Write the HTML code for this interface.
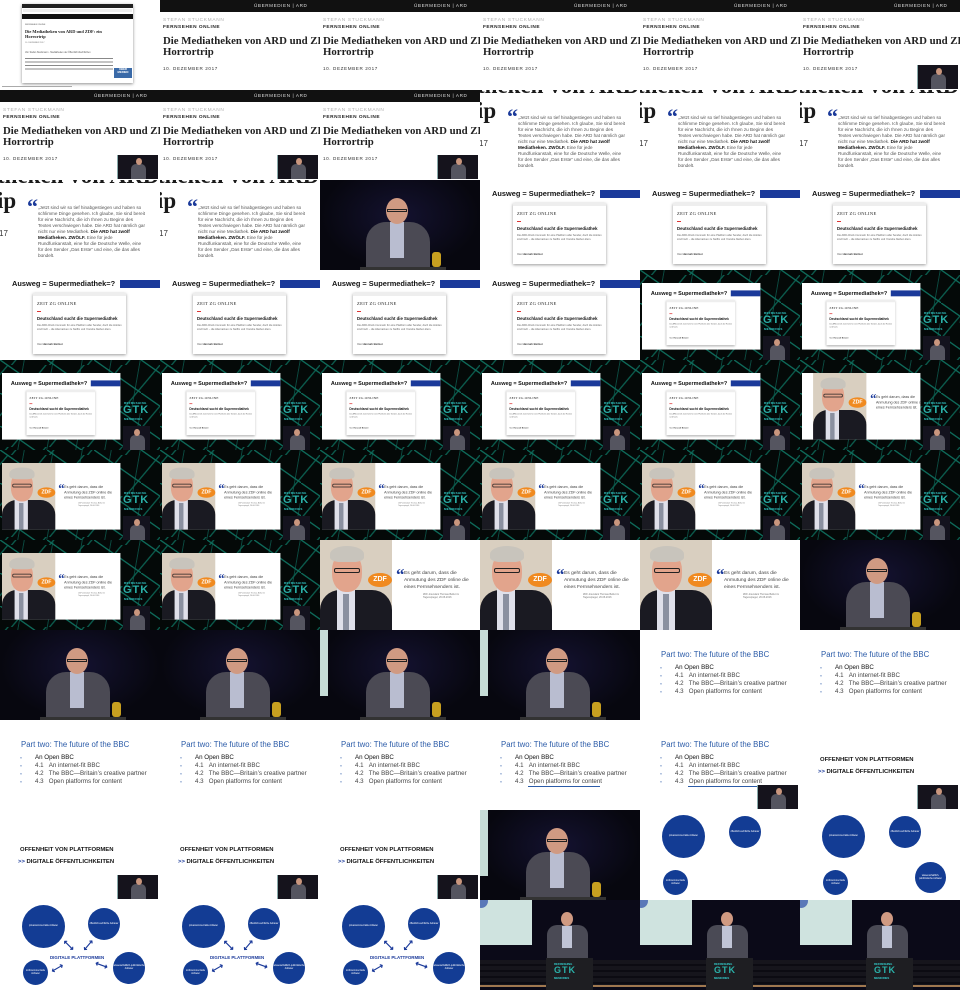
<!DOCTYPE html>
<html><head><meta charset="utf-8"><style>
*{margin:0;padding:0;box-sizing:border-box}
body{width:960px;height:990px;overflow:hidden;background:#fff}
.grid{display:grid;grid-template-columns:repeat(6,160px);grid-template-rows:repeat(11,90px)}
.c{position:relative;overflow:hidden;width:160px;height:90px;background:#fff;font-family:"Liberation Sans",sans-serif}
.c div{position:absolute;white-space:nowrap}
.bar{left:0;top:0;width:160px;height:12px;background:#111}
.bar span{position:absolute;left:94px;top:3px;font-size:4.6px;color:#ddd;letter-spacing:.6px}
.au{left:3px;top:18px;font-size:4.8px;color:#b0b0b0;letter-spacing:.7px}
.fo{left:3px;top:25px;font-size:4.8px;font-weight:bold;color:#222;letter-spacing:.5px}
.tt{left:3px;top:36px;font:bold 10.8px/11px "Liberation Serif",serif;color:#222}
.dt{left:3px;top:66px;font-size:4.6px;color:#333;letter-spacing:.6px}
.th{left:117px;top:65px;width:41px;height:24px;background:#15131c;border-left:1px solid #8aa}
.tb{left:13px;top:9px;width:15px;height:15px;background:#555560;border-radius:5px 5px 0 0}
.th2{left:18px;top:3px;width:6px;height:7px;background:#c9967e;border-radius:50%}
.qt{left:-3px;top:-17px;font:bold 23px "Liberation Serif",serif;color:#1a1a1a}
.ip{left:-3px;top:8px;font:bold 23px "Liberation Serif",serif;color:#1a1a1a}
.y17{left:-1px;top:49px;font-size:8px;color:#333}
.qm{left:27px;top:14px;font:bold 22px "Liberation Serif",serif;color:#1b3a9a}
.qx{left:38px;top:25px;width:108px;font-size:4.6px;line-height:6px;color:#555;white-space:normal!important}
.qx b{color:#111}
.wt{left:12px;top:9px;font-weight:bold;font-size:7.4px;color:#111}
.wb{left:120px;top:10px;width:40px;height:8px;background:#1b3a9a}
.card{left:33px;top:23px;width:93px;height:61px;background:#fff;box-shadow:0 1px 3px rgba(0,0,0,.4)}
.k1{left:0;top:0;width:93px;height:3px;background:#eee}
.k2{left:4px;top:8px;font:4.6px "Liberation Serif",serif;color:#222;letter-spacing:.3px}
.k3{left:4px;top:18px;width:4px;height:1px;background:#d33}
.k4{left:4px;top:23px;font-weight:bold;font-size:4.3px;color:#111}
.k5{left:4px;top:31px;width:85px;font-size:2.6px;line-height:3.6px;color:#666;white-space:normal!important}
.k6{left:4px;top:49px;font-size:2.8px;color:#444}
.g{background:linear-gradient(35deg,transparent 48.5%,#0e6a5a 49.5%,#0e6a5a 51%,transparent 52%) 0 0/47px 33px,linear-gradient(-50deg,transparent 48.5%,#0b5a4c 49.5%,#0b5a4c 51%,transparent 52%) 10px 5px/38px 41px,linear-gradient(100deg,transparent 48.5%,#0a4a40 49.5%,#0a4a40 51%,transparent 52%) 5px 0/29px 53px,#040908}
.gs{left:2px;top:13px;width:160px;height:90px;background:#fff;transform:scale(.74);transform-origin:0 0;overflow:hidden}
.l1{left:124px;top:41px;font-size:3px;font-weight:bold;color:#3cc;letter-spacing:.3px}
.l2{left:123px;top:44px;font-size:11px;font-weight:bold;color:#2ab0a8;letter-spacing:1px}
.l3{left:124px;top:57px;font-size:3px;font-weight:bold;color:#3cc;letter-spacing:.3px}
.gp{left:123px;top:66px;width:27px;height:24px;background:#14131e}
.zp{left:0;top:0;width:72px;height:90px;background:#d9cfc0}
.zs{left:0;top:50px;width:72px;height:40px;background:#1a1a22;border-radius:20px 20px 0 0}
.zsh{left:17px;top:48px;width:18px;height:42px;background:#dfe0ea}
.zti{left:23px;top:54px;width:6px;height:36px;background:#8a90a0}
.zf{left:12px;top:12px;width:30px;height:40px;background:#e2a48c;border-radius:45%}
.zh{left:10px;top:6px;width:34px;height:16px;background:#c8c4bc;border-radius:50% 50% 30% 30%}
.zg{left:14px;top:28px;width:26px;height:5px;border:1px solid #222;border-radius:2px}
.zdf{left:48px;top:33px;width:24px;height:14px;background:#f08a20;border-radius:50%;color:#fff;font-size:7px;font-weight:bold;line-height:14px;text-align:center}
.zq{left:76px;top:25px;font:bold 17px "Liberation Serif",serif;color:#1b3a9a}
.zx{left:84px;top:30px;width:70px;font-size:4.9px;line-height:7px;color:#444;white-space:normal!important}
.zc{left:103px;top:53px;font-size:2.5px;line-height:3.2px;color:#777}
.sp{background:radial-gradient(ellipse at 50% 40%,#141230,#07070f 70%)}
.scr{left:0;top:0;width:8px;height:66px;background:#c6dcd7}
.bd{left:46px;top:42px;width:64px;height:50px;background:#4b4a54;border-radius:20px 20px 0 0}
.sh{left:70px;top:42px;width:14px;height:36px;background:#b9bdd0}
.hd{left:66px;top:18px;width:22px;height:26px;background:#d09a82;border-radius:50%}
.gl{left:67px;top:29px;width:20px;height:3px;border:1px solid #222}
.gd{left:112px;top:72px;width:9px;height:15px;background:#c8a020;border-radius:3px}
.pd{left:40px;top:87px;width:86px;height:3px;background:#333}
.bt{left:21px;top:20px;font-size:7.8px;color:#2b5ba8}
.bl{font-size:6.2px;color:#444}
.bu{left:20px;font-size:3.5px;color:#2b5ba8}
.un{left:48px;top:66px;width:72px;height:1px;background:#2b5ba8}
.o1{left:20px;top:37px;font-weight:bold;font-size:5.9px;color:#111}
.o2{left:18px;top:49px;font-weight:bold;font-size:5.9px;color:#111}
.o2 span{color:#1b3a9a}
.ci{background:#133c94;border-radius:50%;color:#fff;font-size:2.3px;line-height:3px;text-align:center;display:flex;align-items:center;justify-content:center;white-space:normal!important}
.dp{left:50px;top:55px;font-weight:bold;font-size:4.4px;color:#1b3a9a}
.ar{font-size:9px;color:#1b3a9a;font-weight:bold}
.st{background:#0b0a18}
.ss{left:0;top:0;width:52px;height:45px;background:#cfe3df}
.sc{left:-6px;top:-6px;width:14px;height:14px;background:#5a78b8;border-radius:50%}
.fl{left:0;top:60px;width:160px;height:26px;background:repeating-linear-gradient(#16151c 0 4px,#0c0b12 4px 6px)}
.ed{left:0;top:85px;width:160px;height:2px;background:#a07850}
.pb{left:67px;top:25px;width:41px;height:36px;background:#4a4a55;border-radius:10px 10px 0 0}
.ps{left:82px;top:26px;width:10px;height:22px;background:#c0c4d6}
.ph{left:81px;top:12px;width:12px;height:14px;background:#d09a82;border-radius:50%}
.po{left:66px;top:58px;width:47px;height:32px;background:#1e1e22}
.pt1{left:74px;top:62px;font-size:2.8px;color:#3cc;font-weight:bold}
.pt2{left:74px;top:65px;font-size:9px;color:#2ab0a8;font-weight:bold;letter-spacing:1px}
.pt3{left:74px;top:76px;font-size:2.8px;color:#3cc;font-weight:bold}
.aw{left:22px;top:4px;width:111px;height:79px;background:#fff;box-shadow:0 1px 3px rgba(0,0,0,.45)}
</style></head><body><div class="grid">

<div class="c"><div class="aw"><div style="left:0;top:0;width:111px;height:4px;background:#222"></div><div style="left:1px;top:5px;width:109px;height:3px;background:#eee"></div><div style="left:0;top:10px;width:111px;height:5px;background:#111"></div><div style="left:3px;top:20px;font-size:2px;color:#555">FERNSEHEN ONLINE</div><div style="left:3px;top:25px;font:bold 4.4px/5px 'Liberation Serif',serif;color:#222">Die Mediatheken von ARD und ZDF: ein<br>Horrortrip</div><div style="left:3px;top:38px;font-size:2px;color:#777">10. DEZEMBER 2017</div><div style="left:3px;top:48px;font-size:2.3px;color:#555">Von Stefan Stuckmann · Mediatheken der Öffentlich-Rechtlichen</div><div style="left:3px;top:54px;width:88px;height:14px;background:repeating-linear-gradient(#888 0 1px,#fff 1px 3.5px)"></div><div style="left:92px;top:64px;width:18px;height:10px;background:#3a6aa8;color:#fff;font-size:2.8px;line-height:3.3px;font-weight:bold;text-align:center">ÜBER<br>MEDIEN</div></div><div style="left:2px;top:86px;width:70px;height:1px;background:#aaa"></div></div>
<div class="c"><div class="bar"><span>ÜBERMEDIEN | ARD</span></div><div class="au">STEFAN STUCKMANN</div><div class="fo">FERNSEHEN ONLINE</div><div class="tt">Die Mediatheken von ARD und ZDF: ein<br>Horrortrip</div><div class="dt">10. DEZEMBER 2017</div></div>
<div class="c"><div class="bar"><span>ÜBERMEDIEN | ARD</span></div><div class="au">STEFAN STUCKMANN</div><div class="fo">FERNSEHEN ONLINE</div><div class="tt">Die Mediatheken von ARD und ZDF: ein<br>Horrortrip</div><div class="dt">10. DEZEMBER 2017</div></div>
<div class="c"><div class="bar"><span>ÜBERMEDIEN | ARD</span></div><div class="au">STEFAN STUCKMANN</div><div class="fo">FERNSEHEN ONLINE</div><div class="tt">Die Mediatheken von ARD und ZDF: ein<br>Horrortrip</div><div class="dt">10. DEZEMBER 2017</div></div>
<div class="c"><div class="bar"><span>ÜBERMEDIEN | ARD</span></div><div class="au">STEFAN STUCKMANN</div><div class="fo">FERNSEHEN ONLINE</div><div class="tt">Die Mediatheken von ARD und ZDF: ein<br>Horrortrip</div><div class="dt">10. DEZEMBER 2017</div></div>
<div class="c"><div class="bar"><span>ÜBERMEDIEN | ARD</span></div><div class="au">STEFAN STUCKMANN</div><div class="fo">FERNSEHEN ONLINE</div><div class="tt">Die Mediatheken von ARD und ZDF: ein<br>Horrortrip</div><div class="dt">10. DEZEMBER 2017</div><div class="th"><div class="tb"></div><div class="th2"></div></div></div>

<div class="c"><div class="bar"><span>ÜBERMEDIEN | ARD</span></div><div class="au">STEFAN STUCKMANN</div><div class="fo">FERNSEHEN ONLINE</div><div class="tt">Die Mediatheken von ARD und ZDF: ein<br>Horrortrip</div><div class="dt">10. DEZEMBER 2017</div><div class="th"><div class="tb"></div><div class="th2"></div></div></div>
<div class="c"><div class="bar"><span>ÜBERMEDIEN | ARD</span></div><div class="au">STEFAN STUCKMANN</div><div class="fo">FERNSEHEN ONLINE</div><div class="tt">Die Mediatheken von ARD und ZDF: ein<br>Horrortrip</div><div class="dt">10. DEZEMBER 2017</div><div class="th"><div class="tb"></div><div class="th2"></div></div></div>
<div class="c"><div class="bar"><span>ÜBERMEDIEN | ARD</span></div><div class="au">STEFAN STUCKMANN</div><div class="fo">FERNSEHEN ONLINE</div><div class="tt">Die Mediatheken von ARD und ZDF: ein<br>Horrortrip</div><div class="dt">10. DEZEMBER 2017</div><div class="th"><div class="tb"></div><div class="th2"></div></div></div>
<div class="c"><div class="qt">theken von ARD</div><div class="ip">ip</div><div class="y17">17</div><div class="qm">“</div><div class="qx">„Jetzt sind wir so tief hinabgestiegen und haben so schlimme Dinge gesehen. Ich glaube, Sie sind bereit für eine Nachricht, die ich Ihnen zu Beginn des Textes verschwiegen habe. Die ARD hat nämlich gar nicht nur eine Mediathek. <b>Die ARD hat zwölf Mediatheken. ZWÖLF.</b> Eine für jede Rundfunkanstalt, eine für die Deutsche Welle, eine für den Sender „Das Erste“ und eine, die das alles bündelt.</div></div>
<div class="c"><div class="qt">theken von ARD</div><div class="ip">ip</div><div class="y17">17</div><div class="qm">“</div><div class="qx">„Jetzt sind wir so tief hinabgestiegen und haben so schlimme Dinge gesehen. Ich glaube, Sie sind bereit für eine Nachricht, die ich Ihnen zu Beginn des Textes verschwiegen habe. Die ARD hat nämlich gar nicht nur eine Mediathek. <b>Die ARD hat zwölf Mediatheken. ZWÖLF.</b> Eine für jede Rundfunkanstalt, eine für die Deutsche Welle, eine für den Sender „Das Erste“ und eine, die das alles bündelt.</div></div>
<div class="c"><div class="qt">theken von ARD</div><div class="ip">ip</div><div class="y17">17</div><div class="qm">“</div><div class="qx">„Jetzt sind wir so tief hinabgestiegen und haben so schlimme Dinge gesehen. Ich glaube, Sie sind bereit für eine Nachricht, die ich Ihnen zu Beginn des Textes verschwiegen habe. Die ARD hat nämlich gar nicht nur eine Mediathek. <b>Die ARD hat zwölf Mediatheken. ZWÖLF.</b> Eine für jede Rundfunkanstalt, eine für die Deutsche Welle, eine für den Sender „Das Erste“ und eine, die das alles bündelt.</div></div>

<div class="c"><div class="qt">theken von ARD</div><div class="ip">ip</div><div class="y17">17</div><div class="qm">“</div><div class="qx">„Jetzt sind wir so tief hinabgestiegen und haben so schlimme Dinge gesehen. Ich glaube, Sie sind bereit für eine Nachricht, die ich Ihnen zu Beginn des Textes verschwiegen habe. Die ARD hat nämlich gar nicht nur eine Mediathek. <b>Die ARD hat zwölf Mediatheken. ZWÖLF.</b> Eine für jede Rundfunkanstalt, eine für die Deutsche Welle, eine für den Sender „Das Erste“ und eine, die das alles bündelt.</div></div>
<div class="c"><div class="qt">theken von ARD</div><div class="ip">ip</div><div class="y17">17</div><div class="qm">“</div><div class="qx">„Jetzt sind wir so tief hinabgestiegen und haben so schlimme Dinge gesehen. Ich glaube, Sie sind bereit für eine Nachricht, die ich Ihnen zu Beginn des Textes verschwiegen habe. Die ARD hat nämlich gar nicht nur eine Mediathek. <b>Die ARD hat zwölf Mediatheken. ZWÖLF.</b> Eine für jede Rundfunkanstalt, eine für die Deutsche Welle, eine für den Sender „Das Erste“ und eine, die das alles bündelt.</div></div>
<div class="c sp"><div class="bd"></div><div class="sh"></div><div class="hd"></div><div class="gl"></div><div class="gd"></div><div class="pd"></div></div>
<div class="c"><div class="wt">Ausweg = Supermediathek=?</div><div class="wb"></div><div class="card"><div class="k1"></div><div class="k2">ZEIT ZG ONLINE</div><div class="k3"></div><div class="k4">Deutschland sucht die Supermediathek</div><div class="k5">Die ARD-Chefs trommeln für eine Plattform aller Sender, doch die Hürden sind hoch – die Alternativen zu Netflix und Youtube bleiben klein.</div><div class="k6">Von <b>Hannah Beitzer</b></div></div></div>
<div class="c"><div class="wt">Ausweg = Supermediathek=?</div><div class="wb"></div><div class="card"><div class="k1"></div><div class="k2">ZEIT ZG ONLINE</div><div class="k3"></div><div class="k4">Deutschland sucht die Supermediathek</div><div class="k5">Die ARD-Chefs trommeln für eine Plattform aller Sender, doch die Hürden sind hoch – die Alternativen zu Netflix und Youtube bleiben klein.</div><div class="k6">Von <b>Hannah Beitzer</b></div></div></div>
<div class="c"><div class="wt">Ausweg = Supermediathek=?</div><div class="wb"></div><div class="card"><div class="k1"></div><div class="k2">ZEIT ZG ONLINE</div><div class="k3"></div><div class="k4">Deutschland sucht die Supermediathek</div><div class="k5">Die ARD-Chefs trommeln für eine Plattform aller Sender, doch die Hürden sind hoch – die Alternativen zu Netflix und Youtube bleiben klein.</div><div class="k6">Von <b>Hannah Beitzer</b></div></div></div>

<div class="c"><div class="wt">Ausweg = Supermediathek=?</div><div class="wb"></div><div class="card"><div class="k1"></div><div class="k2">ZEIT ZG ONLINE</div><div class="k3"></div><div class="k4">Deutschland sucht die Supermediathek</div><div class="k5">Die ARD-Chefs trommeln für eine Plattform aller Sender, doch die Hürden sind hoch – die Alternativen zu Netflix und Youtube bleiben klein.</div><div class="k6">Von <b>Hannah Beitzer</b></div></div></div>
<div class="c"><div class="wt">Ausweg = Supermediathek=?</div><div class="wb"></div><div class="card"><div class="k1"></div><div class="k2">ZEIT ZG ONLINE</div><div class="k3"></div><div class="k4">Deutschland sucht die Supermediathek</div><div class="k5">Die ARD-Chefs trommeln für eine Plattform aller Sender, doch die Hürden sind hoch – die Alternativen zu Netflix und Youtube bleiben klein.</div><div class="k6">Von <b>Hannah Beitzer</b></div></div></div>
<div class="c"><div class="wt">Ausweg = Supermediathek=?</div><div class="wb"></div><div class="card"><div class="k1"></div><div class="k2">ZEIT ZG ONLINE</div><div class="k3"></div><div class="k4">Deutschland sucht die Supermediathek</div><div class="k5">Die ARD-Chefs trommeln für eine Plattform aller Sender, doch die Hürden sind hoch – die Alternativen zu Netflix und Youtube bleiben klein.</div><div class="k6">Von <b>Hannah Beitzer</b></div></div></div>
<div class="c"><div class="wt">Ausweg = Supermediathek=?</div><div class="wb"></div><div class="card"><div class="k1"></div><div class="k2">ZEIT ZG ONLINE</div><div class="k3"></div><div class="k4">Deutschland sucht die Supermediathek</div><div class="k5">Die ARD-Chefs trommeln für eine Plattform aller Sender, doch die Hürden sind hoch – die Alternativen zu Netflix und Youtube bleiben klein.</div><div class="k6">Von <b>Hannah Beitzer</b></div></div></div>
<div class="c g"><div class="gs"><div class="wt">Ausweg = Supermediathek=?</div><div class="wb"></div><div class="card"><div class="k1"></div><div class="k2">ZEIT ZG ONLINE</div><div class="k3"></div><div class="k4">Deutschland sucht die Supermediathek</div><div class="k5">Die ARD-Chefs trommeln für eine Plattform aller Sender, doch die Hürden sind hoch.</div><div class="k6">Von <b>Hannah Beitzer</b></div></div></div><div class="l1">REFRESHING</div><div class="l2">GTK</div><div class="l3">MEMORIES</div><div class="gp"><div class="tb" style="left:7px"></div><div class="th2" style="left:11px"></div></div></div>
<div class="c g"><div class="gs"><div class="wt">Ausweg = Supermediathek=?</div><div class="wb"></div><div class="card"><div class="k1"></div><div class="k2">ZEIT ZG ONLINE</div><div class="k3"></div><div class="k4">Deutschland sucht die Supermediathek</div><div class="k5">Die ARD-Chefs trommeln für eine Plattform aller Sender, doch die Hürden sind hoch.</div><div class="k6">Von <b>Hannah Beitzer</b></div></div></div><div class="l1">REFRESHING</div><div class="l2">GTK</div><div class="l3">MEMORIES</div><div class="gp"><div class="tb" style="left:7px"></div><div class="th2" style="left:11px"></div></div></div>

<div class="c g"><div class="gs"><div class="wt">Ausweg = Supermediathek=?</div><div class="wb"></div><div class="card"><div class="k1"></div><div class="k2">ZEIT ZG ONLINE</div><div class="k3"></div><div class="k4">Deutschland sucht die Supermediathek</div><div class="k5">Die ARD-Chefs trommeln für eine Plattform aller Sender, doch die Hürden sind hoch.</div><div class="k6">Von <b>Hannah Beitzer</b></div></div></div><div class="l1">REFRESHING</div><div class="l2">GTK</div><div class="l3">MEMORIES</div><div class="gp"><div class="tb" style="left:7px"></div><div class="th2" style="left:11px"></div></div></div>
<div class="c g"><div class="gs"><div class="wt">Ausweg = Supermediathek=?</div><div class="wb"></div><div class="card"><div class="k1"></div><div class="k2">ZEIT ZG ONLINE</div><div class="k3"></div><div class="k4">Deutschland sucht die Supermediathek</div><div class="k5">Die ARD-Chefs trommeln für eine Plattform aller Sender, doch die Hürden sind hoch.</div><div class="k6">Von <b>Hannah Beitzer</b></div></div></div><div class="l1">REFRESHING</div><div class="l2">GTK</div><div class="l3">MEMORIES</div><div class="gp"><div class="tb" style="left:7px"></div><div class="th2" style="left:11px"></div></div></div>
<div class="c g"><div class="gs"><div class="wt">Ausweg = Supermediathek=?</div><div class="wb"></div><div class="card"><div class="k1"></div><div class="k2">ZEIT ZG ONLINE</div><div class="k3"></div><div class="k4">Deutschland sucht die Supermediathek</div><div class="k5">Die ARD-Chefs trommeln für eine Plattform aller Sender, doch die Hürden sind hoch.</div><div class="k6">Von <b>Hannah Beitzer</b></div></div></div><div class="l1">REFRESHING</div><div class="l2">GTK</div><div class="l3">MEMORIES</div><div class="gp"><div class="tb" style="left:7px"></div><div class="th2" style="left:11px"></div></div></div>
<div class="c g"><div class="gs"><div class="wt">Ausweg = Supermediathek=?</div><div class="wb"></div><div class="card"><div class="k1"></div><div class="k2">ZEIT ZG ONLINE</div><div class="k3"></div><div class="k4">Deutschland sucht die Supermediathek</div><div class="k5">Die ARD-Chefs trommeln für eine Plattform aller Sender, doch die Hürden sind hoch.</div><div class="k6">Von <b>Hannah Beitzer</b></div></div></div><div class="l1">REFRESHING</div><div class="l2">GTK</div><div class="l3">MEMORIES</div><div class="gp"><div class="tb" style="left:7px"></div><div class="th2" style="left:11px"></div></div></div>
<div class="c g"><div class="gs"><div class="wt">Ausweg = Supermediathek=?</div><div class="wb"></div><div class="card"><div class="k1"></div><div class="k2">ZEIT ZG ONLINE</div><div class="k3"></div><div class="k4">Deutschland sucht die Supermediathek</div><div class="k5">Die ARD-Chefs trommeln für eine Plattform aller Sender, doch die Hürden sind hoch.</div><div class="k6">Von <b>Hannah Beitzer</b></div></div></div><div class="l1">REFRESHING</div><div class="l2">GTK</div><div class="l3">MEMORIES</div><div class="gp"><div class="tb" style="left:7px"></div><div class="th2" style="left:11px"></div></div></div>
<div class="c g"><div class="gs"><div class="zp" style="left:15px"><div class="zs"></div><div class="zsh"></div><div class="zti"></div><div class="zf"></div><div class="zh"></div><div class="zg"></div><div class="zdf">ZDF</div></div><div class="zq" style="left:92px">“</div><div class="zx" style="left:100px">Es geht darum, dass die Anmutung des ZDF online die eines Fernsehsenders ist.</div></div><div class="l1">REFRESHING</div><div class="l2">GTK</div><div class="l3">MEMORIES</div><div class="gp"><div class="tb" style="left:7px"></div><div class="th2" style="left:11px"></div></div></div>

<div class="c g"><div class="gs"><div class="zp"><div class="zs"></div><div class="zsh"></div><div class="zti"></div><div class="zf"></div><div class="zh"></div><div class="zg"></div><div class="zdf">ZDF</div></div><div class="zq">“</div><div class="zx">Es geht darum, dass die Anmutung des ZDF online die eines Fernsehsenders ist.</div><div class="zc">ZDF-Intendant Thomas Bellut im<br>Tagesspiegel, 26.06.2016</div></div><div class="l1">REFRESHING</div><div class="l2">GTK</div><div class="l3">MEMORIES</div><div class="gp"><div class="tb" style="left:7px"></div><div class="th2" style="left:11px"></div></div></div>
<div class="c g"><div class="gs"><div class="zp"><div class="zs"></div><div class="zsh"></div><div class="zti"></div><div class="zf"></div><div class="zh"></div><div class="zg"></div><div class="zdf">ZDF</div></div><div class="zq">“</div><div class="zx">Es geht darum, dass die Anmutung des ZDF online die eines Fernsehsenders ist.</div><div class="zc">ZDF-Intendant Thomas Bellut im<br>Tagesspiegel, 26.06.2016</div></div><div class="l1">REFRESHING</div><div class="l2">GTK</div><div class="l3">MEMORIES</div><div class="gp"><div class="tb" style="left:7px"></div><div class="th2" style="left:11px"></div></div></div>
<div class="c g"><div class="gs"><div class="zp"><div class="zs"></div><div class="zsh"></div><div class="zti"></div><div class="zf"></div><div class="zh"></div><div class="zg"></div><div class="zdf">ZDF</div></div><div class="zq">“</div><div class="zx">Es geht darum, dass die Anmutung des ZDF online die eines Fernsehsenders ist.</div><div class="zc">ZDF-Intendant Thomas Bellut im<br>Tagesspiegel, 26.06.2016</div></div><div class="l1">REFRESHING</div><div class="l2">GTK</div><div class="l3">MEMORIES</div><div class="gp"><div class="tb" style="left:7px"></div><div class="th2" style="left:11px"></div></div></div>
<div class="c g"><div class="gs"><div class="zp"><div class="zs"></div><div class="zsh"></div><div class="zti"></div><div class="zf"></div><div class="zh"></div><div class="zg"></div><div class="zdf">ZDF</div></div><div class="zq">“</div><div class="zx">Es geht darum, dass die Anmutung des ZDF online die eines Fernsehsenders ist.</div><div class="zc">ZDF-Intendant Thomas Bellut im<br>Tagesspiegel, 26.06.2016</div></div><div class="l1">REFRESHING</div><div class="l2">GTK</div><div class="l3">MEMORIES</div><div class="gp"><div class="tb" style="left:7px"></div><div class="th2" style="left:11px"></div></div></div>
<div class="c g"><div class="gs"><div class="zp"><div class="zs"></div><div class="zsh"></div><div class="zti"></div><div class="zf"></div><div class="zh"></div><div class="zg"></div><div class="zdf">ZDF</div></div><div class="zq">“</div><div class="zx">Es geht darum, dass die Anmutung des ZDF online die eines Fernsehsenders ist.</div><div class="zc">ZDF-Intendant Thomas Bellut im<br>Tagesspiegel, 26.06.2016</div></div><div class="l1">REFRESHING</div><div class="l2">GTK</div><div class="l3">MEMORIES</div><div class="gp"><div class="tb" style="left:7px"></div><div class="th2" style="left:11px"></div></div></div>
<div class="c g"><div class="gs"><div class="zp"><div class="zs"></div><div class="zsh"></div><div class="zti"></div><div class="zf"></div><div class="zh"></div><div class="zg"></div><div class="zdf">ZDF</div></div><div class="zq">“</div><div class="zx">Es geht darum, dass die Anmutung des ZDF online die eines Fernsehsenders ist.</div><div class="zc">ZDF-Intendant Thomas Bellut im<br>Tagesspiegel, 26.06.2016</div></div><div class="l1">REFRESHING</div><div class="l2">GTK</div><div class="l3">MEMORIES</div><div class="gp"><div class="tb" style="left:7px"></div><div class="th2" style="left:11px"></div></div></div>

<div class="c g"><div class="gs"><div class="zp"><div class="zs"></div><div class="zsh"></div><div class="zti"></div><div class="zf"></div><div class="zh"></div><div class="zg"></div><div class="zdf">ZDF</div></div><div class="zq">“</div><div class="zx">Es geht darum, dass die Anmutung des ZDF online die eines Fernsehsenders ist.</div><div class="zc">ZDF-Intendant Thomas Bellut im<br>Tagesspiegel, 26.06.2016</div></div><div class="l1">REFRESHING</div><div class="l2">GTK</div><div class="l3">MEMORIES</div><div class="gp"><div class="tb" style="left:7px"></div><div class="th2" style="left:11px"></div></div></div>
<div class="c g"><div class="gs"><div class="zp"><div class="zs"></div><div class="zsh"></div><div class="zti"></div><div class="zf"></div><div class="zh"></div><div class="zg"></div><div class="zdf">ZDF</div></div><div class="zq">“</div><div class="zx">Es geht darum, dass die Anmutung des ZDF online die eines Fernsehsenders ist.</div><div class="zc">ZDF-Intendant Thomas Bellut im<br>Tagesspiegel, 26.06.2016</div></div><div class="l1">REFRESHING</div><div class="l2">GTK</div><div class="l3">MEMORIES</div><div class="gp"><div class="tb" style="left:7px"></div><div class="th2" style="left:11px"></div></div></div>
<div class="c"><div class="zp"><div class="zs"></div><div class="zsh"></div><div class="zti"></div><div class="zf"></div><div class="zh"></div><div class="zg"></div><div class="zdf">ZDF</div></div><div class="zq">“</div><div class="zx">Es geht darum, dass die Anmutung des ZDF online die eines Fernsehsenders ist.</div><div class="zc">ZDF-Intendant Thomas Bellut im<br>Tagesspiegel, 26.06.2016</div></div>
<div class="c"><div class="zp"><div class="zs"></div><div class="zsh"></div><div class="zti"></div><div class="zf"></div><div class="zh"></div><div class="zg"></div><div class="zdf">ZDF</div></div><div class="zq">“</div><div class="zx">Es geht darum, dass die Anmutung des ZDF online die eines Fernsehsenders ist.</div><div class="zc">ZDF-Intendant Thomas Bellut im<br>Tagesspiegel, 26.06.2016</div></div>
<div class="c"><div class="zp"><div class="zs"></div><div class="zsh"></div><div class="zti"></div><div class="zf"></div><div class="zh"></div><div class="zg"></div><div class="zdf">ZDF</div></div><div class="zq">“</div><div class="zx">Es geht darum, dass die Anmutung des ZDF online die eines Fernsehsenders ist.</div><div class="zc">ZDF-Intendant Thomas Bellut im<br>Tagesspiegel, 26.06.2016</div></div>
<div class="c sp"><div class="bd"></div><div class="sh"></div><div class="hd"></div><div class="gl"></div><div class="gd"></div><div class="pd"></div></div>

<div class="c sp"><div class="bd"></div><div class="sh"></div><div class="hd"></div><div class="gl"></div><div class="gd"></div><div class="pd"></div></div>
<div class="c sp"><div class="bd"></div><div class="sh"></div><div class="hd"></div><div class="gl"></div><div class="gd"></div><div class="pd"></div></div>
<div class="c sp"><div class="scr"></div><div class="bd"></div><div class="sh"></div><div class="hd"></div><div class="gl"></div><div class="gd"></div><div class="pd"></div></div>
<div class="c sp"><div class="scr"></div><div class="bd"></div><div class="sh"></div><div class="hd"></div><div class="gl"></div><div class="gd"></div><div class="pd"></div></div>
<div class="c"><div class="bt">Part two: The future of the BBC</div><div class="bu" style="top:36px">»</div><div class="bl" style="left:35px;top:34px;color:#111">An Open BBC</div><div class="bu" style="top:44px">»</div><div class="bl" style="left:35px;top:42px">4.1&nbsp;&nbsp;&nbsp;An internet-fit BBC</div><div class="bu" style="top:52px">»</div><div class="bl" style="left:35px;top:50px">4.2&nbsp;&nbsp;&nbsp;The BBC—Britain’s creative partner</div><div class="bu" style="top:60px">»</div><div class="bl" style="left:35px;top:58px">4.3&nbsp;&nbsp;&nbsp;Open platforms for content</div></div>
<div class="c"><div class="bt">Part two: The future of the BBC</div><div class="bu" style="top:36px">»</div><div class="bl" style="left:35px;top:34px;color:#111">An Open BBC</div><div class="bu" style="top:44px">»</div><div class="bl" style="left:35px;top:42px">4.1&nbsp;&nbsp;&nbsp;An internet-fit BBC</div><div class="bu" style="top:52px">»</div><div class="bl" style="left:35px;top:50px">4.2&nbsp;&nbsp;&nbsp;The BBC—Britain’s creative partner</div><div class="bu" style="top:60px">»</div><div class="bl" style="left:35px;top:58px">4.3&nbsp;&nbsp;&nbsp;Open platforms for content</div></div>

<div class="c"><div class="bt">Part two: The future of the BBC</div><div class="bu" style="top:36px">»</div><div class="bl" style="left:35px;top:34px;color:#111">An Open BBC</div><div class="bu" style="top:44px">»</div><div class="bl" style="left:35px;top:42px">4.1&nbsp;&nbsp;&nbsp;An internet-fit BBC</div><div class="bu" style="top:52px">»</div><div class="bl" style="left:35px;top:50px">4.2&nbsp;&nbsp;&nbsp;The BBC—Britain’s creative partner</div><div class="bu" style="top:60px">»</div><div class="bl" style="left:35px;top:58px">4.3&nbsp;&nbsp;&nbsp;Open platforms for content</div></div>
<div class="c"><div class="bt">Part two: The future of the BBC</div><div class="bu" style="top:36px">»</div><div class="bl" style="left:35px;top:34px;color:#111">An Open BBC</div><div class="bu" style="top:44px">»</div><div class="bl" style="left:35px;top:42px">4.1&nbsp;&nbsp;&nbsp;An internet-fit BBC</div><div class="bu" style="top:52px">»</div><div class="bl" style="left:35px;top:50px">4.2&nbsp;&nbsp;&nbsp;The BBC—Britain’s creative partner</div><div class="bu" style="top:60px">»</div><div class="bl" style="left:35px;top:58px">4.3&nbsp;&nbsp;&nbsp;Open platforms for content</div></div>
<div class="c"><div class="bt">Part two: The future of the BBC</div><div class="bu" style="top:36px">»</div><div class="bl" style="left:35px;top:34px;color:#111">An Open BBC</div><div class="bu" style="top:44px">»</div><div class="bl" style="left:35px;top:42px">4.1&nbsp;&nbsp;&nbsp;An internet-fit BBC</div><div class="bu" style="top:52px">»</div><div class="bl" style="left:35px;top:50px">4.2&nbsp;&nbsp;&nbsp;The BBC—Britain’s creative partner</div><div class="bu" style="top:60px">»</div><div class="bl" style="left:35px;top:58px">4.3&nbsp;&nbsp;&nbsp;Open platforms for content</div></div>
<div class="c"><div class="bt">Part two: The future of the BBC</div><div class="bu" style="top:36px">»</div><div class="bl" style="left:35px;top:34px;color:#111">An Open BBC</div><div class="bu" style="top:44px">»</div><div class="bl" style="left:35px;top:42px">4.1&nbsp;&nbsp;&nbsp;An internet-fit BBC</div><div class="bu" style="top:52px">»</div><div class="bl" style="left:35px;top:50px">4.2&nbsp;&nbsp;&nbsp;The BBC—Britain’s creative partner</div><div class="bu" style="top:60px">»</div><div class="bl" style="left:35px;top:58px">4.3&nbsp;&nbsp;&nbsp;Open platforms for content</div><div class="un"></div></div>
<div class="c"><div class="bt">Part two: The future of the BBC</div><div class="bu" style="top:36px">»</div><div class="bl" style="left:35px;top:34px;color:#111">An Open BBC</div><div class="bu" style="top:44px">»</div><div class="bl" style="left:35px;top:42px">4.1&nbsp;&nbsp;&nbsp;An internet-fit BBC</div><div class="bu" style="top:52px">»</div><div class="bl" style="left:35px;top:50px">4.2&nbsp;&nbsp;&nbsp;The BBC—Britain’s creative partner</div><div class="bu" style="top:60px">»</div><div class="bl" style="left:35px;top:58px">4.3&nbsp;&nbsp;&nbsp;Open platforms for content</div><div class="un"></div><div class="th"><div class="tb"></div><div class="th2"></div></div></div>
<div class="c"><div class="o1">OFFENHEIT VON PLATTFORMEN</div><div class="o2"><span>&gt;&gt;</span> DIGITALE ÖFFENTLICHKEITEN</div><div class="th"><div class="tb"></div><div class="th2"></div></div></div>

<div class="c"><div class="o1">OFFENHEIT VON PLATTFORMEN</div><div class="o2"><span>&gt;&gt;</span> DIGITALE ÖFFENTLICHKEITEN</div><div class="th"><div class="tb"></div><div class="th2"></div></div></div>
<div class="c"><div class="o1">OFFENHEIT VON PLATTFORMEN</div><div class="o2"><span>&gt;&gt;</span> DIGITALE ÖFFENTLICHKEITEN</div><div class="th"><div class="tb"></div><div class="th2"></div></div></div>
<div class="c"><div class="o1">OFFENHEIT VON PLATTFORMEN</div><div class="o2"><span>&gt;&gt;</span> DIGITALE ÖFFENTLICHKEITEN</div><div class="th"><div class="tb"></div><div class="th2"></div></div></div>
<div class="c sp"><div class="scr"></div><div class="bd"></div><div class="sh"></div><div class="hd"></div><div class="gl"></div><div class="gd"></div><div class="pd"></div></div>
<div class="c"><div class="ci" style="left:22px;top:5px;width:43px;height:43px">privat-kommerzielle Anbieter</div><div class="ci" style="left:89px;top:6px;width:32px;height:32px">öffentlich-rechtliche Anbieter</div><div class="ci" style="left:23px;top:60px;width:25px;height:25px">nicht-kommerzielle Anbieter</div></div>
<div class="c"><div class="ci" style="left:22px;top:5px;width:43px;height:43px">privat-kommerzielle Anbieter</div><div class="ci" style="left:89px;top:6px;width:32px;height:32px">öffentlich-rechtliche Anbieter</div><div class="ci" style="left:23px;top:60px;width:25px;height:25px">nicht-kommerzielle Anbieter</div><div class="ci" style="left:115px;top:52px;width:31px;height:31px">wissenschaftlich-publizistische Anbieter</div></div>

<div class="c"><div class="ci" style="left:22px;top:5px;width:43px;height:43px">privat-kommerzielle Anbieter</div><div class="ci" style="left:88px;top:8px;width:32px;height:32px">öffentlich-rechtliche Anbieter</div><div class="ci" style="left:23px;top:60px;width:25px;height:25px">nicht-kommerzielle Anbieter</div><div class="ci" style="left:113px;top:52px;width:32px;height:32px">wissenschaftlich-publizistische Anbieter</div><div class="dp">DIGITALE PLATTFORMEN</div><div class="ar" style="left:62px;top:40px;transform:rotate(45deg)">⟷</div><div class="ar" style="left:82px;top:40px;transform:rotate(-50deg)">⟷</div><div class="ar" style="left:51px;top:63px;transform:rotate(-30deg)">⟷</div><div class="ar" style="left:95px;top:60px;transform:rotate(20deg)">⟷</div></div>
<div class="c"><div class="ci" style="left:22px;top:5px;width:43px;height:43px">privat-kommerzielle Anbieter</div><div class="ci" style="left:88px;top:8px;width:32px;height:32px">öffentlich-rechtliche Anbieter</div><div class="ci" style="left:23px;top:60px;width:25px;height:25px">nicht-kommerzielle Anbieter</div><div class="ci" style="left:113px;top:52px;width:32px;height:32px">wissenschaftlich-publizistische Anbieter</div><div class="dp">DIGITALE PLATTFORMEN</div><div class="ar" style="left:62px;top:40px;transform:rotate(45deg)">⟷</div><div class="ar" style="left:82px;top:40px;transform:rotate(-50deg)">⟷</div><div class="ar" style="left:51px;top:63px;transform:rotate(-30deg)">⟷</div><div class="ar" style="left:95px;top:60px;transform:rotate(20deg)">⟷</div></div>
<div class="c"><div class="ci" style="left:22px;top:5px;width:43px;height:43px">privat-kommerzielle Anbieter</div><div class="ci" style="left:88px;top:8px;width:32px;height:32px">öffentlich-rechtliche Anbieter</div><div class="ci" style="left:23px;top:60px;width:25px;height:25px">nicht-kommerzielle Anbieter</div><div class="ci" style="left:113px;top:52px;width:32px;height:32px">wissenschaftlich-publizistische Anbieter</div><div class="dp">DIGITALE PLATTFORMEN</div><div class="ar" style="left:62px;top:40px;transform:rotate(45deg)">⟷</div><div class="ar" style="left:82px;top:40px;transform:rotate(-50deg)">⟷</div><div class="ar" style="left:51px;top:63px;transform:rotate(-30deg)">⟷</div><div class="ar" style="left:95px;top:60px;transform:rotate(20deg)">⟷</div></div>
<div class="c st"><div class="ss"><div class="sc"></div></div><div class="fl"></div><div class="ed"></div><div class="pb"></div><div class="ps"></div><div class="ph"></div><div class="po"></div><div class="pt1">REFRESHING</div><div class="pt2">GTK</div><div class="pt3">MEMORIES</div></div>
<div class="c st"><div class="ss"><div class="sc"></div></div><div class="fl"></div><div class="ed"></div><div class="pb"></div><div class="ps"></div><div class="ph"></div><div class="po"></div><div class="pt1">REFRESHING</div><div class="pt2">GTK</div><div class="pt3">MEMORIES</div></div>
<div class="c st"><div class="ss"><div class="sc"></div></div><div class="fl"></div><div class="ed"></div><div class="pb"></div><div class="ps"></div><div class="ph"></div><div class="po"></div><div class="pt1">REFRESHING</div><div class="pt2">GTK</div><div class="pt3">MEMORIES</div></div>

</div></body></html>
